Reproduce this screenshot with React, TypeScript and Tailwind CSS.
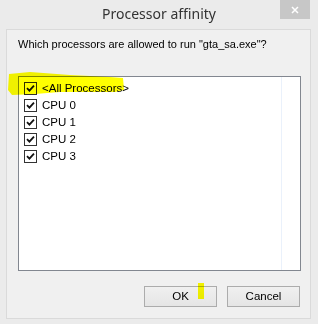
import React from "react";

const Check = () => (
  <span className="w-[13px] h-[13px] border border-[#333333] bg-white flex items-center justify-center shrink-0">
    <svg width="9" height="9" viewBox="0 0 9 9">
      <path d="M1 4.2 L3.4 6.6 L8 1.6" stroke="#111" strokeWidth="1.8" fill="none" />
    </svg>
  </span>
);

const items = ["<All Processors>", "CPU 0", "CPU 1", "CPU 2", "CPU 3"];

export default function App() {
  return (
    <div
      className="relative w-[318px] h-[324px] bg-[#ebebeb] overflow-hidden"
      style={{ fontFamily: '"Liberation Sans", Arial, sans-serif' }}
    >
      <div className="h-[29px] flex items-center justify-center relative">
        <span
          className="text-[14px] text-[#333] pb-[3px]"
          style={{ fontFamily: '"Noto Sans", "Open Sans", sans-serif' }}
        >
          Processor affinity
        </span>
        <div className="absolute right-[8px] top-0 w-[30px] h-[19px] bg-[#c7c7c7] flex items-center justify-center">
          <svg width="8" height="8" viewBox="0 0 8 8">
            <path d="M1 1 L7 7 M7 1 L1 7" stroke="#fff" strokeWidth="1.5" />
          </svg>
        </div>
      </div>
      <div className="ml-[6px] mr-[7px] h-[290px] border border-[#dadada] bg-[#f0f0f0] flex flex-col">
        <div className="pl-[11px] pt-[7px] text-[11px] text-black leading-[14px]">
          Which processors are allowed to run "gta_sa.exe"?
        </div>
        <div className="ml-[11px] mr-[9px] mt-[25px] h-[195px] border border-[#828790] bg-white relative">
          <div className="absolute left-[262px] top-0 bottom-0 w-px bg-[#eaf1fb]" />
          <div className="pt-[3px] pl-[5px] flex flex-col">
            {items.map((t) => (
              <div key={t} className="h-[17px] flex items-center gap-[5px] text-[11.5px] text-black">
                <Check />
                <span>{t}</span>
              </div>
            ))}
          </div>
        </div>
        <div className="flex justify-end gap-[10px] mr-[10px] mt-[15px]">
          {["OK", "Cancel"].map((b) => (
            <div
              key={b}
              className="w-[73px] h-[21px] border border-[#acacac] bg-gradient-to-b from-[#f0f0f0] to-[#e5e5e5] flex items-center justify-center text-[11.5px] text-black"
            >
              {b}
            </div>
          ))}
        </div>
      </div>
      <svg className="absolute left-0 top-0 pointer-events-none mix-blend-multiply" width="318" height="324">
        <path
          d="M9 74 L30 72 L70 75 L110 77 L123 78 L124 90 L115 92 L60 92 L35 94 L12 95 L8 90 Z"
          fill="#ffff00"
        />
        <rect x="198" y="283" width="6" height="16" fill="#ffff00" />
      </svg>
    </div>
  );
}
